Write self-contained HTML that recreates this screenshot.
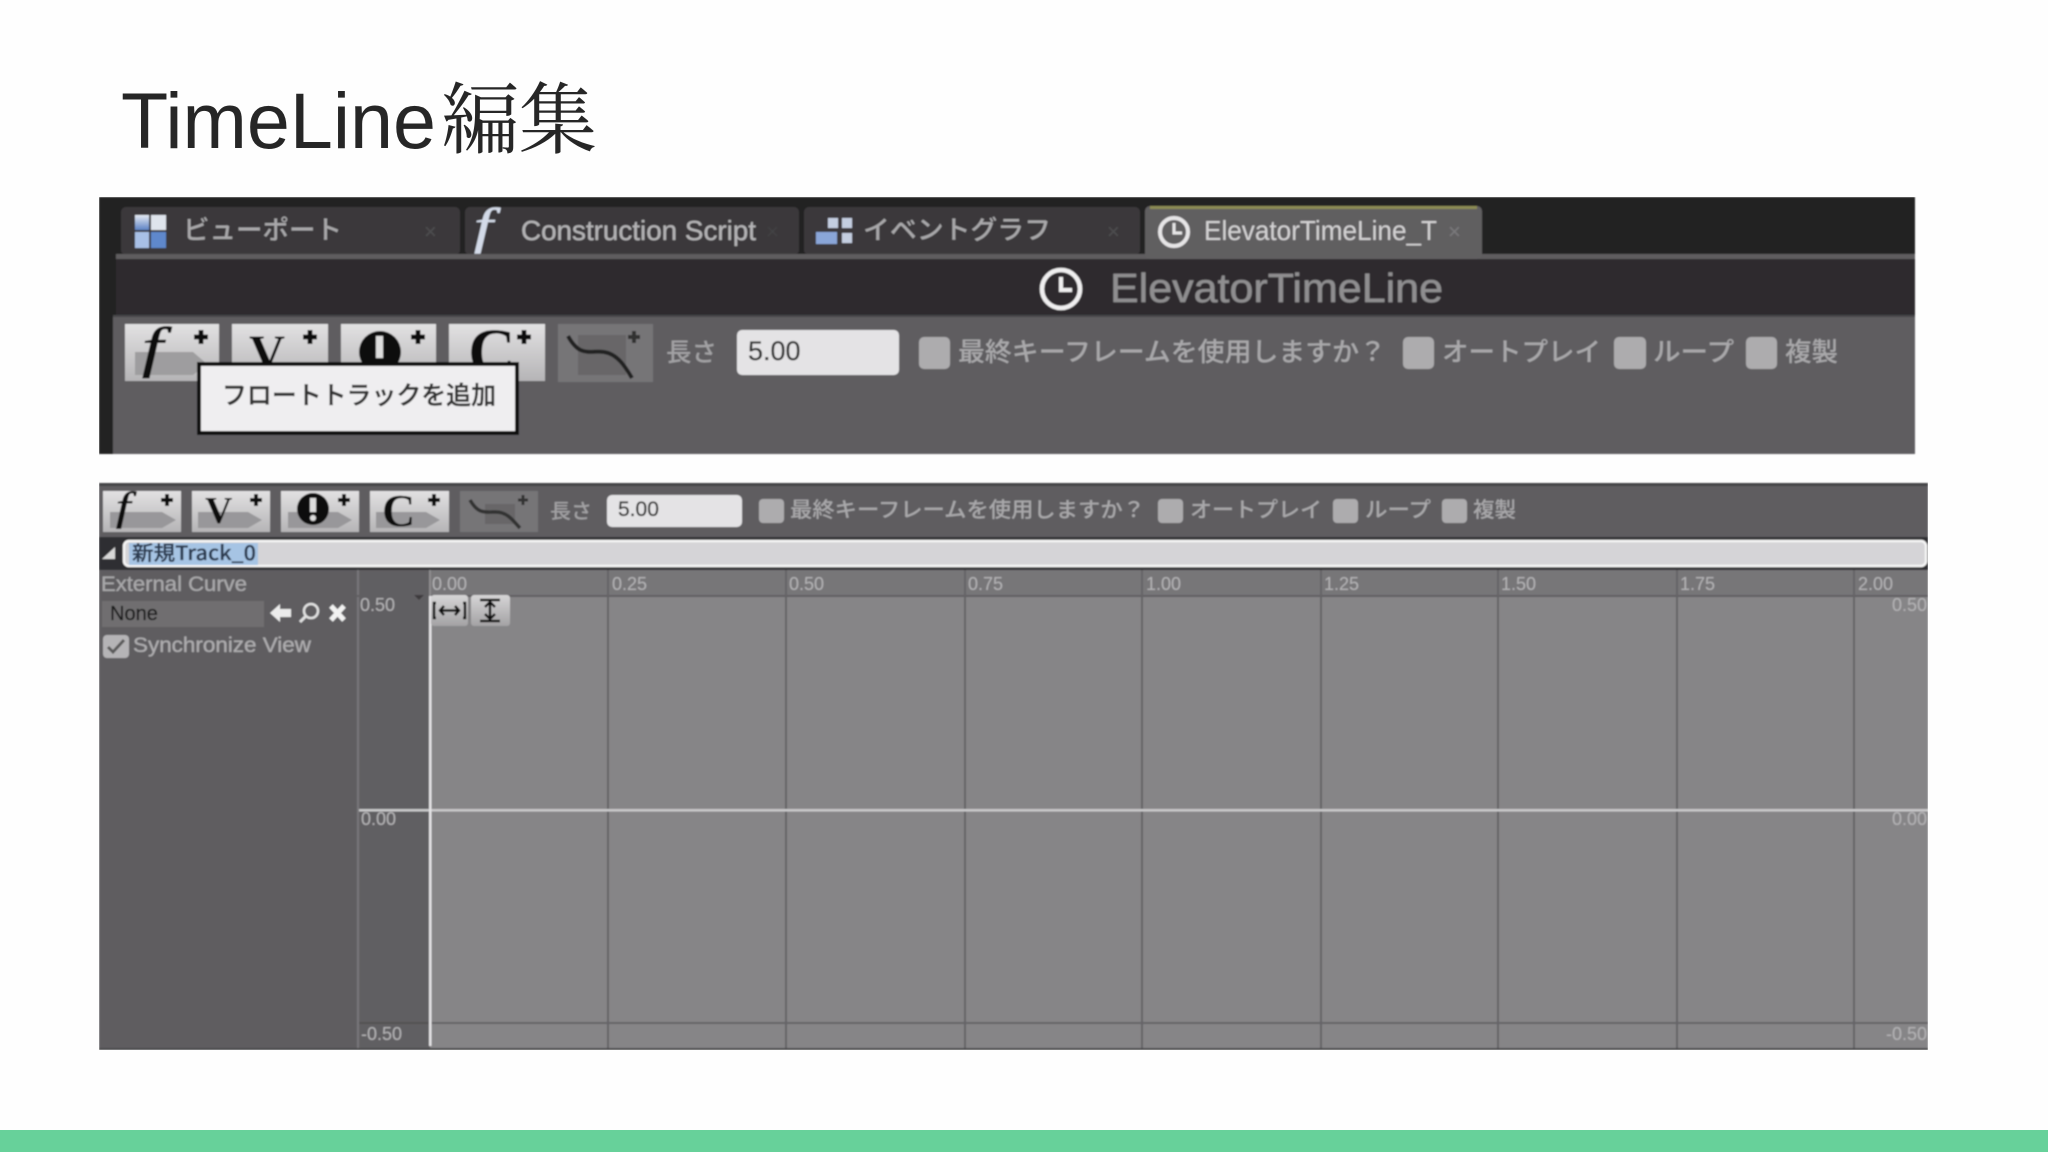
<!DOCTYPE html>
<html lang="ja"><head><meta charset="utf-8"><title>TimeLine編集</title>
<style>
html,body{margin:0;padding:0;background:#fefefe;width:2048px;height:1152px;overflow:hidden}
svg{display:block}
text{font-family:"Liberation Sans","Noto Sans CJK JP",sans-serif}
.j{font-family:"Noto Sans CJK JP","Liberation Sans",sans-serif;font-weight:500}
.s{font-family:"Liberation Serif","Noto Serif CJK SC",serif}
</style></head><body>
<svg width="2048" height="1152" viewBox="0 0 2048 1152" xmlns="http://www.w3.org/2000/svg">
<defs>
<filter id="b" x="0" y="0" width="100%" height="100%"><feGaussianBlur stdDeviation="0.9"/></filter>
<linearGradient id="btn" x1="0" y1="0" x2="0" y2="1"><stop offset="0" stop-color="#e2e1e2"/><stop offset="1" stop-color="#b5b4b6"/></linearGradient>
<linearGradient id="win" x1="0" y1="0" x2="0" y2="1"><stop offset="0" stop-color="#e6ebf3"/><stop offset="1" stop-color="#5c82c4"/></linearGradient>
<linearGradient id="small" x1="0" y1="0" x2="0" y2="1"><stop offset="0" stop-color="#d6d5d6"/><stop offset="1" stop-color="#a3a2a4"/></linearGradient>
</defs>
<rect width="2048" height="1152" fill="#fefefe"/>
<rect y="1130" width="2048" height="22" fill="#67d19a"/>

<!-- Title -->
<text x="121" y="148" font-size="79" fill="#262626" textLength="315" lengthAdjust="spacingAndGlyphs">TimeLine</text>
<text class="s" x="441" y="147" font-size="78" fill="#262626" textLength="156" lengthAdjust="spacingAndGlyphs">編集</text>

<g filter="url(#b)">
<!-- PANEL 1 -->
<rect x="99" y="197" width="1816" height="257" fill="#242224"/>
<rect x="121" y="207" width="339" height="48" rx="5" fill="#3a393b"/>
<rect x="465" y="207" width="334" height="48" rx="5" fill="#3a393b"/>
<rect x="804" y="207" width="336" height="48" rx="5" fill="#3a393b"/>
<rect x="116" y="254" width="1799" height="5" fill="#5e5d5f"/>
<rect x="1145" y="206" width="337" height="53" rx="5" fill="#605f61"/>
<rect x="1150" y="206" width="327" height="3" fill="#8c8b55"/>
<rect x="116" y="259" width="1799" height="56" fill="#2e2c2f"/>
<rect x="113" y="315" width="1802" height="139" fill="#5e5d60"/>
<rect x="113" y="315" width="1802" height="2" fill="#47464a"/>

<!-- Tab 1 -->
<g><rect x="135" y="215" width="14" height="15" fill="url(#win)"/><rect x="151" y="215" width="15" height="15" fill="#dfe4ec"/><rect x="135" y="232" width="14" height="16" fill="#a8c0e6"/><rect x="151" y="232" width="15" height="16" fill="#5e88cc"/></g>
<text class="j" x="183" y="239" font-size="26" fill="#a9a8aa" textLength="159" lengthAdjust="spacingAndGlyphs">ビューポート</text>
<text x="424" y="239" font-size="22" fill="#4e4d4f">×</text>
<!-- Tab 2 -->
<text class="s" transform="translate(474 243) scale(1.35 1)" font-size="50" font-style="italic" fill="#d3dae8" stroke="#d3dae8" stroke-width=".5">f</text>
<text x="521" y="240" font-size="28" fill="#b4b3b5" stroke="#b4b3b5" stroke-width=".3" textLength="235" lengthAdjust="spacingAndGlyphs">Construction Script</text>
<text x="766" y="239" font-size="22" fill="#434244">×</text>
<!-- Tab 3 -->
<g fill="#c4cee0"><rect x="828" y="218" width="10" height="10"/><rect x="842" y="218" width="10" height="10"/><rect x="842" y="233" width="10" height="10"/></g><rect x="816" y="232" width="21" height="12" fill="#8aa6d8"/>
<text class="j" x="863" y="239" font-size="26" fill="#a9a8aa" textLength="188" lengthAdjust="spacingAndGlyphs">イベントグラフ</text>
<text x="1107" y="239" font-size="22" fill="#4e4d4f">×</text>
<!-- Tab 4 -->
<circle cx="1174" cy="232" r="14" fill="none" stroke="#e6e5e6" stroke-width="4"/><path d="M1174 223v10h8" fill="none" stroke="#e6e5e6" stroke-width="3"/>
<text x="1204" y="240" font-size="28" fill="#d3d2d3" textLength="233" lengthAdjust="spacingAndGlyphs">ElevatorTimeLine_T</text>
<text x="1448" y="239" font-size="22" fill="#7a797b">×</text>
<!-- Title bar -->
<circle cx="1061" cy="289" r="19" fill="none" stroke="#f0eff0" stroke-width="4.5"/><path d="M1061 277v13h11" fill="none" stroke="#f0eff0" stroke-width="4"/>
<text x="1110" y="302" font-size="41" fill="#8f8e90" stroke="#8f8e90" stroke-width=".4" textLength="333" lengthAdjust="spacingAndGlyphs">ElevatorTimeLine</text>

<!-- Buttons P1 -->
<g>
<rect x="125" y="324" width="94" height="57" fill="url(#btn)"/><path d="M135 352h58l14 12-14 11h-58z" fill="#9e9d9f"/>
<text class="s" transform="translate(142 366) scale(1.35 1)" font-size="56" font-style="italic" fill="#111" stroke="#111" stroke-width=".8">f</text><path d="M194 337h14M201 330v14" stroke="#111" stroke-width="5"/>
<rect x="232" y="324" width="96" height="57" fill="url(#btn)"/><text class="s" x="249" y="369" font-size="50" font-weight="bold" fill="#111">V</text><path d="M303 337h14M310 330v14" stroke="#111" stroke-width="5"/>
<rect x="341" y="324" width="95" height="57" fill="url(#btn)"/><circle cx="380" cy="352" r="21" fill="#111"/><rect x="376" y="336" width="7" height="22" fill="#ddd"/><path d="M411 337h14M418 330v14" stroke="#111" stroke-width="5"/>
<rect x="449" y="324" width="96" height="57" fill="url(#btn)"/><text class="s" x="468" y="374" font-size="66" font-weight="bold" fill="#111">C</text><path d="M517 337h14M524 330v14" stroke="#111" stroke-width="5"/>
<rect x="558" y="324" width="95" height="58" fill="#767577"/><rect x="578" y="335" width="48" height="40" fill="#676668"/><path d="M568 336c12 22 22 14 36 16 14 2 22 16 28 26" fill="none" stroke="#222" stroke-width="4"/><path d="M628 337h12M634 331v12" stroke="#333" stroke-width="4"/>
</g>
<text class="j" x="666" y="361" font-size="25" fill="#a3a2a4" textLength="51" lengthAdjust="spacingAndGlyphs">長さ</text>
<rect x="737" y="330" width="162" height="45" rx="5" fill="#e4e3e5"/>
<text x="748" y="360" font-size="27" fill="#333" stroke="#333" stroke-width=".3">5.00</text>
<rect x="919" y="337" width="31" height="32" rx="5" fill="#adacae"/>
<text class="j" x="958" y="361" font-size="26" fill="#a9a8aa" textLength="428" lengthAdjust="spacingAndGlyphs">最終キーフレームを使用しますか？</text>
<rect x="1403" y="337" width="31" height="32" rx="5" fill="#adacae"/>
<text class="j" x="1442" y="361" font-size="26" fill="#a9a8aa" textLength="159" lengthAdjust="spacingAndGlyphs">オートプレイ</text>
<rect x="1614" y="337" width="32" height="32" rx="5" fill="#adacae"/>
<text class="j" x="1653" y="361" font-size="26" fill="#a9a8aa" textLength="81" lengthAdjust="spacingAndGlyphs">ループ</text>
<rect x="1746" y="337" width="31" height="32" rx="5" fill="#adacae"/>
<text class="j" x="1785" y="361" font-size="26" fill="#a9a8aa" textLength="53" lengthAdjust="spacingAndGlyphs">複製</text>
<!-- Tooltip -->
<rect x="199" y="364" width="318" height="69" fill="#efeef0" stroke="#111" stroke-width="4"/>
<text class="j" x="222" y="404" font-size="25" fill="#333" stroke="#333" stroke-width=".4" textLength="274" lengthAdjust="spacingAndGlyphs">フロートトラックを追加</text>

<!-- PANEL 2 -->
<rect x="99" y="483" width="1829" height="54" fill="#5e5d60"/>
<rect x="99" y="483" width="1829" height="3" fill="#454446"/>
<g>
<rect x="103" y="491" width="78" height="41" fill="url(#btn)"/><path d="M110 512h52l14 8-14 8h-52z" fill="#98979a"/><text class="s" transform="translate(116 520) scale(1.3 1)" font-size="40" font-style="italic" fill="#111" stroke="#111" stroke-width=".7">f</text><path d="M161 500h12M167 494v12" stroke="#111" stroke-width="4"/>
<rect x="192" y="491" width="78" height="41" fill="url(#btn)"/><path d="M198 512h50l14 8-14 8h-50z" fill="#98979a"/><text class="s" x="205" y="523" font-size="38" font-weight="bold" fill="#111">V</text><path d="M250 500h12M256 494v12" stroke="#111" stroke-width="4"/>
<rect x="281" y="491" width="78" height="41" fill="url(#btn)"/><path d="M288 512h50l14 8-14 8h-50z" fill="#98979a"/><circle cx="313" cy="509" r="16" fill="#111"/><rect x="310" y="498" width="6" height="14" fill="#ddd"/><circle cx="313" cy="518" r="3" fill="#ddd"/><path d="M338 500h12M344 494v12" stroke="#111" stroke-width="4"/>
<rect x="370" y="491" width="79" height="41" fill="url(#btn)"/><path d="M376 512h50l14 8-14 8h-50z" fill="#98979a"/><text class="s" x="382" y="526" font-size="46" font-weight="bold" fill="#111">C</text><path d="M428 500h12M434 494v12" stroke="#111" stroke-width="4"/>
<rect x="460" y="491" width="78" height="41" fill="#767577"/><rect x="485" y="504" width="30" height="20" fill="#676668"/><path d="M470 500c8 14 14 12 26 12 12 0 18 10 24 16" fill="none" stroke="#333" stroke-width="3.5"/><path d="M518 500h10M523 495v10" stroke="#333" stroke-width="3"/>
</g>
<text class="j" x="550" y="518" font-size="20" fill="#a3a2a4" textLength="42" lengthAdjust="spacingAndGlyphs">長さ</text>
<rect x="607" y="495" width="135" height="32" rx="5" fill="#e4e3e5"/>
<text x="618" y="516" font-size="21" fill="#333" stroke="#333" stroke-width=".3">5.00</text>
<rect x="759" y="499" width="25" height="24" rx="4" fill="#adacae"/>
<text class="j" x="790" y="517" font-size="21" fill="#a9a8aa" textLength="355" lengthAdjust="spacingAndGlyphs">最終キーフレームを使用しますか？</text>
<rect x="1158" y="499" width="25" height="24" rx="4" fill="#adacae"/>
<text class="j" x="1190" y="517" font-size="21" fill="#a9a8aa" textLength="132" lengthAdjust="spacingAndGlyphs">オートプレイ</text>
<rect x="1333" y="499" width="25" height="24" rx="4" fill="#adacae"/>
<text class="j" x="1365" y="517" font-size="21" fill="#a9a8aa" textLength="66" lengthAdjust="spacingAndGlyphs">ループ</text>
<rect x="1442" y="499" width="25" height="24" rx="4" fill="#adacae"/>
<text class="j" x="1473" y="517" font-size="21" fill="#a9a8aa" textLength="43" lengthAdjust="spacingAndGlyphs">複製</text>

<!-- Track row -->
<rect x="99" y="537" width="1829" height="33" fill="#2f2e30"/>
<path d="M102 559l13-12v12z" fill="#d8d8d8"/>
<rect x="124" y="541" width="1802" height="25" rx="5" fill="#d5d4d7" stroke="#f6f6f6" stroke-width="2.5"/>
<rect x="129" y="543" width="129" height="22" fill="#a6c4e4"/>
<text class="j" x="132" y="560" font-size="20" fill="#2c3a50" stroke="#2c3a50" stroke-width=".3" textLength="124" lengthAdjust="spacingAndGlyphs">新規Track_0</text>

<!-- Body -->
<rect x="99" y="570" width="258" height="480" fill="#5e5d60"/>
<rect x="357" y="570" width="73" height="480" fill="#605f62"/>
<rect x="357" y="570" width="2" height="480" fill="#78777a"/>
<rect x="430" y="570" width="1498" height="480" fill="#868587"/>
<rect x="430" y="570" width="1498" height="26" fill="#777678"/>
<rect x="357" y="595" width="1571" height="2" fill="#605f62"/>
<g fill="#656466">
<rect x="607" y="570" width="2" height="480"/><rect x="785" y="570" width="2" height="480"/><rect x="964" y="570" width="2" height="480"/><rect x="1141" y="570" width="2" height="480"/><rect x="1320" y="570" width="2" height="480"/><rect x="1497" y="570" width="2" height="480"/><rect x="1676" y="570" width="2" height="480"/><rect x="1853" y="570" width="2" height="480"/>
<rect x="430" y="1022" width="1498" height="2"/>
</g>
<rect x="359" y="1022" width="71" height="2" fill="#525153"/>
<rect x="359" y="809" width="1569" height="2.5" fill="#c8c7c9"/>
<rect x="429" y="570" width="2" height="26" fill="#8e8d8f"/>
<rect x="429" y="596" width="2.500" height="450" fill="#e4e3e5"/>
<rect x="99" y="1048" width="1829" height="2" fill="#4a494b"/>

<g font-size="18" fill="#b4b3b5">
<text x="432" y="590">0.00</text><text x="612" y="590">0.25</text><text x="789" y="590">0.50</text><text x="968" y="590">0.75</text><text x="1146" y="590">1.00</text><text x="1324" y="590">1.25</text><text x="1501" y="590">1.50</text><text x="1680" y="590">1.75</text><text x="1858" y="590">2.00</text>
<text x="360" y="611">0.50</text><text x="361" y="825">0.00</text><text x="361" y="1040">-0.50</text>
<text x="1927" y="611" text-anchor="end">0.50</text><text x="1927" y="825" text-anchor="end">0.00</text><text x="1927" y="1040" text-anchor="end">-0.50</text>
</g>
<path d="M414 595h10l-5 5z" fill="#3c3b3d"/>
<text x="101" y="591" font-size="21" fill="#a9a8aa" stroke="#a9a8aa" stroke-width=".3" textLength="146" lengthAdjust="spacingAndGlyphs">External Curve</text>
<rect x="102" y="601" width="162" height="26" fill="#6f6e70"/>
<text x="110" y="620" font-size="20" fill="#1a1a1a" stroke="#1a1a1a" stroke-width=".3">None</text>
<path d="M270 613l10-9v5h11v8h-11v5z" fill="#ececec"/>
<circle cx="311" cy="611" r="7" fill="none" stroke="#e0e0e0" stroke-width="2.500"/><path d="M306 616l-6 6" stroke="#e0e0e0" stroke-width="3"/>
<path d="M331 606l13 14M344 606l-13 14" stroke="#f2f2f2" stroke-width="5"/>
<rect x="103" y="635" width="26" height="23" rx="4" fill="#b5b4b6"/><path d="M108 647l5 5 11-12" fill="none" stroke="#5a5a5a" stroke-width="3"/>
<text x="133" y="652" font-size="21" fill="#adacae" stroke="#adacae" stroke-width=".3" textLength="178" lengthAdjust="spacingAndGlyphs">Synchronize View</text>
<!-- small buttons -->
<rect x="431" y="595" width="37" height="31" rx="3" fill="url(#small)"/>
<path d="M436 603h-2v15h2M463 603h2v15h-2M440 610.500h19M444 606l-4 4.500 4 4.500M455 606l4 4.500-4 4.500" fill="none" stroke="#111" stroke-width="2.500"/>
<rect x="471" y="595" width="39" height="31" rx="3" fill="url(#small)"/>
<path d="M480 600h20M480 621h20M490 603v15M485 607l5-5 5 5M485 614l5 5 5-5" fill="none" stroke="#111" stroke-width="2.500"/>
</g>
</svg>
</body></html>
